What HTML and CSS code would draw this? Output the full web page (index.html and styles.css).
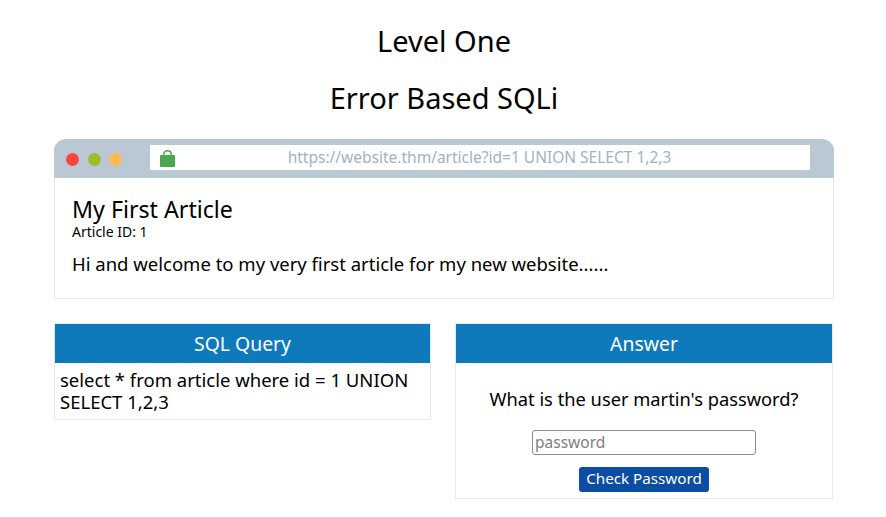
FILE: index.html
```html
<!DOCTYPE html>
<html lang="en">
<head>
    <meta charset="UTF-8">
    <title>Level One - Error Based SQLi</title>
    <link rel="stylesheet" href="styles.css">
</head>
<body>
    <div class="container">
        <h1>Level One</h1>
        <h1>Error Based SQLi</h1>
        <div class="browser">
            <div class="browser-bar">
                <div class="dots">
                    <span class="dot dot-red"></span>
                    <span class="dot dot-green"></span>
                    <span class="dot dot-yellow"></span>
                </div>
                <div class="address">
                    <svg class="lock" viewBox="0 0 15 17" width="15" height="17">
                        <path d="M3.700 7V4.500C3.700 2.300 5.300 0.800 7.500 0.800s3.800 1.500 3.800 3.700V7" fill="none" stroke="#4ca650" stroke-width="1.500"/>
                        <rect x="0" y="5" width="15" height="12" rx="1" fill="#4ca650"/>
                    </svg>
                    <span class="url">https://website.thm/article?id=1 UNION SELECT 1,2,3</span>
                </div>
            </div>
            <div class="browser-body">
                <div class="article-title">My First Article</div>
                <div class="article-id">Article ID: 1</div>
                <p>Hi and welcome to my very first article for my new website......</p>
            </div>
        </div>
        <div class="panels">
            <div class="panel">
                <div class="panel-head">SQL Query</div>
                <div class="query">select * from article where id = 1 UNION SELECT 1,2,3</div>
            </div>
            <div class="panel">
                <div class="panel-head">Answer</div>
                <form class="answer">
                    <div class="question">What is the user martin's password?</div>
                    <input type="text" placeholder="password">
                    <button type="button">Check Password</button>
                </form>
            </div>
        </div>
    </div>
</body>
</html>
```

FILE: styles.css
```css
* {
    box-sizing: border-box;
    margin: 0;
    padding: 0;
}
body {
    font-family: 'Noto Sans', 'Open Sans', sans-serif;
    background-color: #ffffff;
    color: #000000;
}
.container {
    width: 780px;
    margin-left: 54px;
    padding-top: 21px;
}
h1 {
    font-size: 29px;
    font-weight: 400;
    line-height: 40px;
    text-align: center;
    margin-bottom: 17px;
}
.browser {
    margin-top: 21px;
    border: 1px solid #e8e8e8;
    border-top: none;
    border-radius: 12px 12px 0 0;
}
.browser-bar {
    display: flex;
    align-items: flex-start;
    height: 39px;
    margin: 0 -1px;
    padding-top: 6px;
    background-color: #bac8d3;
    border-radius: 12px 12px 0 0;
}
.dots {
    display: flex;
    gap: 8.5px;
    width: 96px;
    margin-top: 8px;
    padding-left: 12px;
}
.dot {
    width: 13px;
    height: 13px;
    border-radius: 50%;
}
.dot-red { background-color: #ff4343; }
.dot-green { background-color: #9bbd30; }
.dot-yellow { background-color: #ffb950; }
.address {
    display: flex;
    align-items: center;
    width: 660px;
    height: 25px;
    background-color: #ffffff;
    padding-left: 10px;
}
.lock {
    flex-shrink: 0;
    margin-top: 2px;
}
.url {
    flex: 1;
    text-align: center;
    font-size: 15.5px;
    color: #a1b2c6;
    padding-right: 26px;
    padding-bottom: 2px;
}
.browser-body {
    height: 120px;
    padding: 17px 18px 0 17px;
}
.article-title {
    font-size: 23.2px;
    line-height: 28px;
}
.article-id {
    font-size: 14px;
    line-height: 16px;
    margin-top: 1px;
}
.browser-body p {
    font-size: 18.5px;
    line-height: 24px;
    margin-top: 12px;
}
.panels {
    display: flex;
    align-items: flex-start;
    gap: 24px;
    margin-top: 24px;
}
.panel {
    width: 377px;
    border: 1px solid #e8e8e8;
}
.panel + .panel {
    width: 378px;
}
.panel-head {
    height: 39px;
    background-color: #0e79bb;
    color: #ffffff;
    font-size: 19.4px;
    line-height: 39px;
    text-align: center;
}
.query {
    font-size: 18.5px;
    line-height: 22px;
    padding: 6px 5px 6px;
}
.answer {
    display: flex;
    flex-direction: column;
    align-items: center;
    height: 135px;
    padding-top: 24px;
}
.question {
    font-size: 18.3px;
    line-height: 24px;
}
input {
    width: 224px;
    height: 25px;
    margin-top: 19px;
    padding: 0 3px 2px 2px;
    border: 1px solid #8a8a94;
    border-radius: 3px;
    font-family: inherit;
    font-size: 15.5px;
}
input::placeholder {
    color: #808080;
}
button {
    width: 130px;
    height: 25px;
    margin-top: 12px;
    padding-bottom: 3px;
    background-color: #0a4da2;
    color: #ffffff;
    border: none;
    border-radius: 3px;
    font-family: inherit;
    font-size: 15.2px;
}
```
